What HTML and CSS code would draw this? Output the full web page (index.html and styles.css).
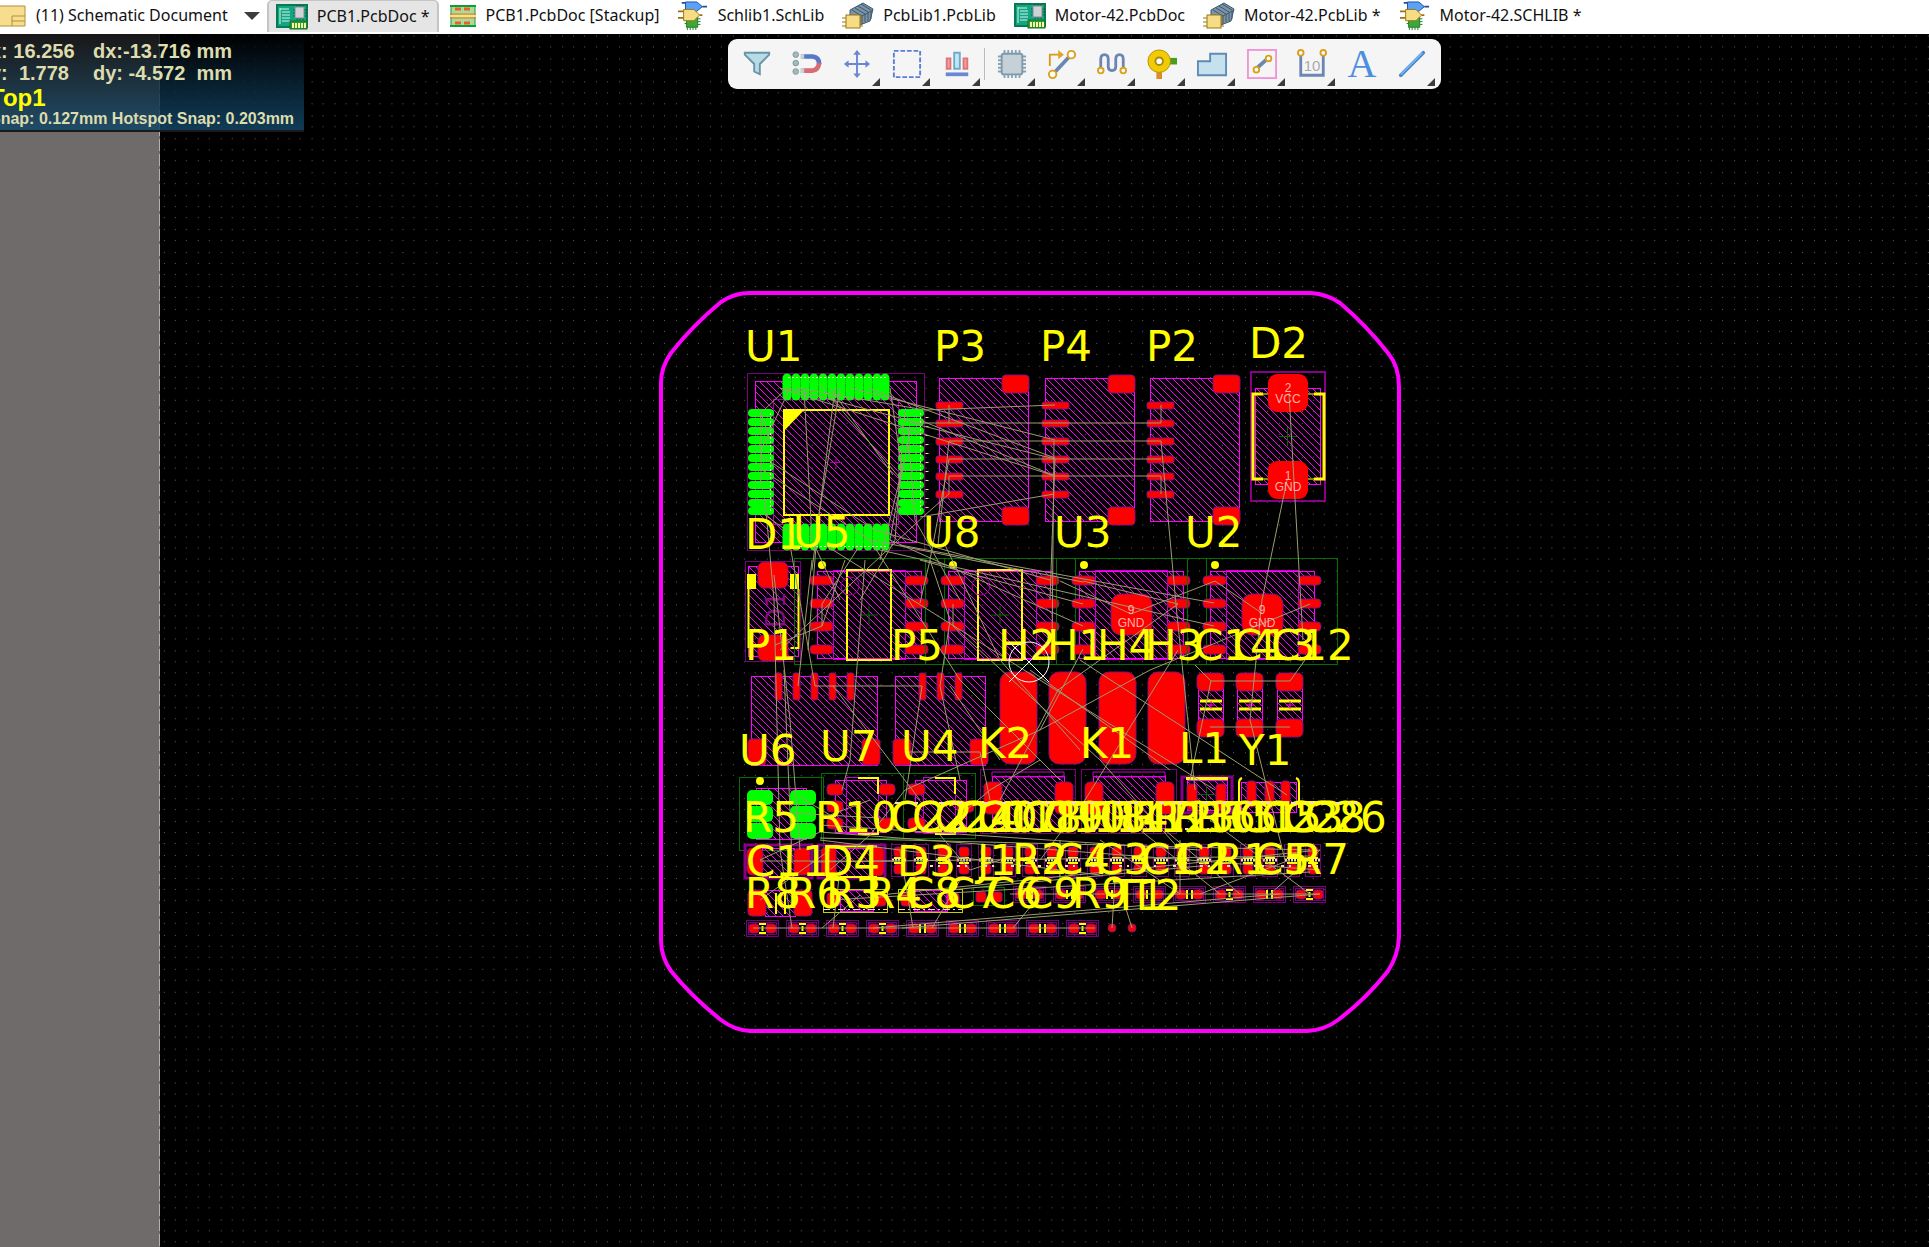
FILE: index.html
```
<!DOCTYPE html>
<html lang="en">
<head>
<meta charset="utf-8">
<title>PCB1.PcbDoc</title>
<link rel="stylesheet" href="styles.css">
</head>
<body>
<svg class="defs" aria-hidden="true">
  <defs>
    <symbol id="i-board" viewBox="0 0 32 26">
      <rect x="1" y="1" width="30" height="22" fill="#12a583" stroke="#067a50" stroke-width="2"/>
      <path d="M4 4v16M4 5h9M6 8h8M6 11h8M6 14h8M6 17h8" stroke="#d5f5e8" stroke-width="1" fill="none"/>
      <path d="M21 1v15M24 1v15M27 1v15M17 6h14M17 9h14M17 12h14" stroke="#06603f" stroke-width="1"/>
      <rect x="19" y="3" width="9" height="11" fill="#cfd3d6" stroke="#889"/>
      <rect x="14" y="17" width="17" height="8" fill="#2c9b35" stroke="#12702a"/>
      <path d="M17 19v5M20 19v5M23 19v5M26 19v5M29 19v5" stroke="#fdf7a0" stroke-width="2"/>
    </symbol>
    <symbol id="i-stack" viewBox="0 0 26 22">
      <rect x="1" y="1" width="24" height="20" fill="#a8dc9c" stroke="#219a3d" stroke-width="1"/>
      <path d="M0 1h26M0 21h26" stroke="#129a3c" stroke-width="2"/>
      <path d="M0 9h26M0 13h26" stroke="#e8732c" stroke-width="1"/><path d="M0 11h26" stroke="#ffe070" stroke-width="2"/>
      <path d="M5 4h6M14 4h6M5 18h6M14 18h6" stroke="#e8641c" stroke-width="3"/>
    </symbol>
    <symbol id="i-schlib" viewBox="0 0 32 32">
      <path d="M9 17h12v11H9z" fill="#3fa63a" stroke="#1f7a26"/>
      <path d="M10 28v3M13 28v3M16 28v3M19 28v3M21 19h3M21 22h3M21 25h3M7 24h2" stroke="#1f7a26"/>
      <path d="M8 1h12l6 5-6 5H8z" fill="#5aa2f7" stroke="#1c4f9c"/><path d="M4 2h4M26 6h5" stroke="#1c4f9c" stroke-width="2"/>
      <path d="M6 9h11l6 6-6 6H6z" fill="#f6dc84" stroke="#9a7412"/><path d="M0 11h6M0 18h6M23 15h3" stroke="#9a7412" stroke-width="2"/>
    </symbol>
    <symbol id="i-pcblib" viewBox="0 0 32 28">
      <path d="M8 8L21 1l10 6-3 12-10 4-10-8z" fill="#7b95a8" stroke="#40566b"/>
      <path d="M10 8l10 6M13 6l10 6M16 4l10 6M19 2l10 6M20 14l11-6M20 14v8M23 12v8M26 11v8M29 9v8" stroke="#40566b" stroke-width="1"/>
      <rect x="4" y="13" width="14" height="13" fill="#f6dc84" stroke="#9a7412"/>
      <path d="M0 16h4M0 20h4M0 24h4M18 16h3M18 20h3M18 24h3" stroke="#9a7412" stroke-width="1"/>
    </symbol>
    <symbol id="i-arrow" viewBox="0 0 8 8"><path d="M8 0v8H0z" fill="#3c3c3c"/></symbol>

    <pattern id="grid" x="653" y="286" width="113.8" height="113.8" patternUnits="userSpaceOnUse">
      <path shape-rendering="crispEdges" fill="none" stroke="#606060" stroke-width="1" d="M0 .5h113M0 11.5h113M0 23.5h113M0 34.5h113M0 45.5h113M0 57.5h113M0 68.5h113M0 80.5h113M0 91.5h113M0 102.5h113" stroke-dasharray="1 10 1 11 1 10 1 10 1 11 1 10 1 11 1 10 1 10 1 11"/>
    </pattern>
    <pattern id="hatch" width="7" height="7" patternUnits="userSpaceOnUse">
      <path d="M-1-1L8 8M6-1L8 1M-1 6L1 8" stroke="#f0f" stroke-width="1"/>
    </pattern>
    <g id="v12"><path d="M0 0v18" stroke="#0f0" stroke-width="9" stroke-linecap="round"/></g>
    <g id="h12"><path d="M0 0h18" stroke="#0f0" stroke-width="8" stroke-linecap="round"/></g>
    <g id="vrow"><use href="#v12"/><use href="#v12" x="9"/><use href="#v12" x="18"/><use href="#v12" x="27"/><use href="#v12" x="36"/><use href="#v12" x="45"/><use href="#v12" x="54"/><use href="#v12" x="63"/><use href="#v12" x="72"/><use href="#v12" x="81"/><use href="#v12" x="90"/><use href="#v12" x="98"/></g>
    <g id="hcol"><use href="#h12"/><use href="#h12" y="9"/><use href="#h12" y="18"/><use href="#h12" y="27"/><use href="#h12" y="36"/><use href="#h12" y="45"/><use href="#h12" y="54"/><use href="#h12" y="63"/><use href="#h12" y="72"/><use href="#h12" y="81"/><use href="#h12" y="90"/><use href="#h12" y="98"/></g>
    <g id="conn">
      <rect class="hatched" x="3.500" y="4.500" width="89" height="143"/>
      <g class="pad"><rect y="28" width="27" height="7" rx="2"/><rect y="46" width="27" height="7" rx="2"/><rect y="64" width="27" height="7" rx="2"/><rect y="82" width="27" height="7" rx="2"/><rect y="99" width="27" height="7" rx="2"/><rect y="117" width="27" height="7" rx="2"/><rect x="66" y="1" width="27" height="18" rx="4"/><rect x="66" y="133" width="27" height="18" rx="4"/></g>
    </g>
    <g id="soic">
      <rect class="court" x=".5" y="1.500" width="150" height="106"/>
      <rect class="hatched" x="23.500" y="14.500" width="104" height="87"/>
      <rect class="frame" x="39.500" y="13.500" width="72" height="89"/>
      <g class="pad"><rect x="16" y="19" width="23" height="9" rx="4"/><rect x="16" y="42" width="23" height="9" rx="4"/><rect x="16" y="65" width="23" height="9" rx="4"/><rect x="16" y="88" width="23" height="9" rx="4"/><rect x="111" y="19" width="23" height="9" rx="4"/><rect x="111" y="42" width="23" height="9" rx="4"/><rect x="111" y="65" width="23" height="9" rx="4"/><rect x="111" y="88" width="23" height="9" rx="4"/></g>
      <circle cx="28" cy="8" r="4" fill="#ff0"/>
      <path d="M66 58h18M75 49v18" stroke="#060"/>
    </g>
    <g id="body"><rect x="53" y="13" width="44" height="90" fill="none" stroke="#ff0" stroke-width="2"/><circle cx="56" cy="29" r="9" fill="none" stroke="#a0a"/></g>
    <g id="bigcap">
      <rect class="hatched" x="1.500" y="10.500" width="25" height="44"/>
      <rect class="padr" width="27" height="18" rx="5"/><rect class="padr" y="46" width="27" height="18" rx="5"/>
      <path d="M3 28h22M3 36h22" stroke="#ff0" stroke-width="3"/><path d="M10 32h8M14 28v8" stroke="#f0f"/>
    </g>
    <g id="hchip"><rect class="court2" x=".5" y=".5" width="32" height="16"/><rect class="court2" x="2.500" y="2.500" width="28" height="12"/><rect class="padr" x="3" y="4" width="10" height="9" rx="3"/><rect class="padr" x="20" y="4" width="10" height="9" rx="3"/></g>
    <g id="res"><use href="#hchip"/><path d="M13 4h7M13 13h7M16.500 6v5" stroke="#ff0" stroke-width="2"/></g>
    <g id="cap"><use href="#hchip"/><path d="M14 4v9M19 4v9" stroke="#ff0" stroke-width="2"/></g>
    <g id="vchip"><rect class="court2" x=".5" y=".5" width="15" height="32"/><rect class="padr" x="3" y="3" width="10" height="10" rx="3"/><rect class="padr" x="3" y="20" width="10" height="10" rx="3"/><path d="M3 14h10M3 19h10" stroke="#ff0" stroke-width="2"/><path d="M1 16h14" stroke="#f5deb3" stroke-width="3" stroke-dasharray="2 1"/></g>
    <g id="relay">
      <rect class="court2" x=".5" y=".5" width="95" height="64"/><rect class="hatched" x="12.500" y="7.500" width="72" height="52"/><path d="M12 3h72v5H12z" fill="none" stroke="#c0c"/>
      <rect class="padr" x="4" y="13" width="18" height="32" rx="5"/><rect class="padr" x="75" y="13" width="18" height="32" rx="5"/>
    </g>
  </defs>
</svg>

<nav class="tabs" aria-label="Open documents">
  <button class="tab group" type="button"><svg class="folder" viewBox="0 0 26 22"><path d="M-2 1h27v20H-2z" fill="#f7de8e" stroke="#b08f3c"/><path d="M12 21V11h13M12 16h13" fill="none" stroke="#b08f3c"/></svg><span>(11) Schematic Document</span><svg class="drop" viewBox="0 0 16 8"><path d="M0 0h16L8 8z" fill="#3c3c3c"/></svg></button>
  <button class="tab active" type="button"><svg class="ti"><use href="#i-board"/></svg><span>PCB1.PcbDoc *</span></button>
  <button class="tab stack" type="button"><svg class="ti small"><use href="#i-stack"/></svg><span>PCB1.PcbDoc [Stackup]</span></button>
  <button class="tab" type="button"><svg class="ti"><use href="#i-schlib"/></svg><span>Schlib1.SchLib</span></button>
  <button class="tab" type="button"><svg class="ti"><use href="#i-pcblib"/></svg><span>PcbLib1.PcbLib</span></button>
  <button class="tab" type="button"><svg class="ti"><use href="#i-board"/></svg><span>Motor-42.PcbDoc</span></button>
  <button class="tab" type="button"><svg class="ti"><use href="#i-pcblib"/></svg><span>Motor-42.PcbLib *</span></button>
  <button class="tab" type="button"><svg class="ti"><use href="#i-schlib"/></svg><span>Motor-42.SCHLIB *</span></button>
</nav>

<main class="editor">
<svg class="canvas" viewBox="0 34 1929 1213" role="img" aria-label="PCB layout">
  <rect y="34" width="1929" height="1213" fill="url(#grid)"/>
  <rect y="34" width="160" height="1213" fill="#706b6b"/>
  <path d="M159.500 34V1247" stroke="#b5b0b0" stroke-dasharray="12 3"/>

  <path d="M750 293H1311Q1327 294 1340 303Q1366 325 1388 353Q1399 366 1399 387V937Q1398 956 1388 971Q1366 999 1338 1020Q1325 1030 1307 1031H750Q734 1030 721 1020Q692 997 671 971Q661 957 661 940V383Q661 367 671 353Q693 325 721 302Q734 293 750 293Z" fill="none" stroke="#f0f" stroke-width="4"/>

  <rect class="court2" x="747.500" y="373.500" width="177" height="177"/>
  <rect class="hatched" x="755.500" y="381.500" width="161" height="161"/>
  <rect x="773.500" y="399.500" width="125" height="125" fill="none" stroke="#a0a"/>
  <use href="#vrow" x="787" y="378"/><use href="#vrow" x="787" y="528"/>
  <use href="#hcol" x="752" y="413"/><use href="#hcol" x="902" y="413"/>
  <g stroke="#e8ffb0" stroke-dasharray="2 2"><path d="M788 377.500h98M788 546.500h98M770.500 413v98M920.500 413v98"/></g>
  <path d="M927 417v96" stroke="#f5deb3" stroke-dasharray="1 8" stroke-width="3"/>
  <rect x="784" y="410" width="105" height="105" fill="none" stroke="#ff0" stroke-width="2"/>
  <path d="M783 409h22l-22 23z" fill="#ff0"/>
  <path d="M830 462.500h12M836 457v12" stroke="#a0a"/>

  <use href="#conn" x="936" y="374"/><use href="#conn" x="1042" y="374"/><use href="#conn" x="1147" y="374"/>

  <rect x="1251" y="372" width="74" height="129" fill="none" stroke="#808" stroke-width="2"/>
  <rect class="hatched" x="1255.500" y="388.500" width="65" height="96"/>
  <path d="M1262 394h53M1262 479h53" stroke="#880" stroke-width="2"/>
  <path d="M1263 394h-10v85h10M1314 394h10v85h-10" fill="none" stroke="#ff0" stroke-width="3"/>
  <rect x="1268" y="374" width="40" height="38" rx="9" fill="red"/><rect x="1268" y="461" width="40" height="38" rx="9" fill="red"/>
  <path d="M1279 436.500h18M1287.500 427v19" stroke="#060"/>

  <rect class="court2" x="745.500" y="561.500" width="55" height="100"/>
  <rect class="hatched" x="748.500" y="566.500" width="50" height="90"/>
  <text class="ghost" transform="translate(785 628) rotate(-90)">D1</text>
  <rect class="padr" x="758" y="562" width="30" height="26" rx="6"/><rect class="padr" x="758" y="635" width="30" height="26" rx="6"/>
  <path d="M747 574h9v15h-9zM790 574h9v15h-9z" fill="#ff0"/><path d="M748.500 589v59M798.500 589v59h-8" stroke="#ff0" fill="none" stroke-width="2"/>

  <use href="#soic" x="794" y="557"/><use href="#soic" x="925" y="557"/><use href="#soic" x="1056" y="557"/><use href="#soic" x="1187" y="557"/>
  <use href="#body" x="794" y="557"/><use href="#body" x="925" y="557"/>
  <rect class="padr" x="1111" y="594" width="41" height="41" rx="10"/><rect class="padr" x="1242" y="594" width="41" height="41" rx="10"/>

  <rect class="hatched" x="751.500" y="676.500" width="126" height="89"/><rect class="hatched" x="895.500" y="676.500" width="90" height="89"/>
  <g class="pad"><rect x="775" y="673" width="7" height="27" rx="2"/><rect x="793" y="673" width="7" height="27" rx="2"/><rect x="811" y="673" width="7" height="27" rx="2"/><rect x="829" y="673" width="7" height="27" rx="2"/><rect x="847" y="673" width="7" height="27" rx="2"/><rect x="919" y="673" width="7" height="27" rx="2"/><rect x="937" y="673" width="7" height="27" rx="2"/><rect x="955" y="673" width="7" height="27" rx="2"/>
  <rect x="748" y="739" width="18" height="26" rx="4"/><rect x="862" y="739" width="18" height="26" rx="4"/><rect x="893" y="739" width="18" height="26" rx="4"/><rect x="970" y="739" width="18" height="26" rx="4"/>
  <rect x="1000" y="672" width="37" height="92" rx="10"/><rect x="1049" y="672" width="37" height="92" rx="10"/><rect x="1099" y="672" width="37" height="92" rx="10"/><rect x="1148" y="672" width="37" height="92" rx="10"/></g>
  <use href="#bigcap" x="1197" y="673"/><use href="#bigcap" x="1236" y="673"/><use href="#bigcap" x="1276" y="673"/>

  <rect class="court" x="739.500" y="777.500" width="84" height="73"/><rect class="hatched" x="756.500" y="788.500" width="50" height="51"/>
  <circle cx="760" cy="781" r="4" fill="#ff0"/>
  <g fill="#0f0"><rect x="747" y="790" width="26" height="15" rx="5"/><rect x="747" y="806" width="26" height="16" rx="5"/><rect x="747" y="823" width="26" height="16" rx="5"/><rect x="790" y="790" width="26" height="15" rx="5"/><rect x="790" y="806" width="26" height="16" rx="5"/><rect x="790" y="823" width="26" height="16" rx="5"/></g>
  <rect class="court" x="821.500" y="773.500" width="82" height="65"/><rect class="court" x="903.500" y="773.500" width="72" height="65"/>
  <rect class="hatched" x="835.500" y="780.500" width="51" height="52"/><rect class="frame" x="846.500" y="777.500" width="32" height="56"/>
  <rect class="hatched" x="915.500" y="780.500" width="51" height="52"/><rect class="frame" x="923.500" y="777.500" width="32" height="56"/>
  <g class="pad"><rect x="827" y="784" width="16" height="11" rx="4"/><rect x="827" y="801" width="16" height="11" rx="4"/><rect x="827" y="818" width="16" height="11" rx="4"/><rect x="879" y="784" width="16" height="11" rx="4"/><rect x="879" y="818" width="16" height="11" rx="4"/><rect x="908" y="784" width="17" height="11" rx="4"/><rect x="908" y="818" width="17" height="11" rx="4"/><rect x="957" y="801" width="17" height="11" rx="4"/></g>
  <path d="M858 778h20v16M858 834h20v-16M935 778h20v16M935 834h20v-16" fill="none" stroke="#ff0" stroke-width="2"/>
  <use href="#relay" x="980" y="769"/><use href="#relay" x="1081" y="769"/>
  <rect class="hatched" x="1187.500" y="780.500" width="40" height="30"/><rect x="1182" y="777" width="50" height="36" fill="none" stroke="#808" stroke-width="3"/><path d="M1186 778.500h42" stroke="#ff0" stroke-width="3"/><path d="M1198 794.500h17M1206.500 786v17" stroke="#060"/>
  <rect class="hatched" x="1241.500" y="782.500" width="55" height="30"/>
  <path d="M1242 778q-3 1-3 5v25M1296 778q3 1 3 5v25" fill="none" stroke="#ff0" stroke-width="2"/>
  <g class="pad"><rect x="1187" y="784" width="10" height="26" rx="3"/><rect x="1216" y="784" width="10" height="26" rx="3"/><rect x="1247" y="781" width="9" height="26" rx="3"/><rect x="1265" y="781" width="9" height="26" rx="3"/><rect x="1281" y="781" width="9" height="26" rx="3"/></g>

  <rect class="hatched" x="762.500" y="848.500" width="32" height="28"/><rect class="hatched" x="834.500" y="848.500" width="37" height="28"/>
  <rect x="745" y="845" width="67" height="33" fill="none" stroke="#808" stroke-width="3"/><rect x="818" y="845" width="67" height="33" fill="none" stroke="#808" stroke-width="3"/>
  <g class="pad"><rect x="747" y="848" width="16" height="27" rx="5"/><rect x="794" y="848" width="16" height="27" rx="5"/><rect x="821" y="847" width="15" height="29" rx="5"/><rect x="870" y="847" width="14" height="29" rx="5"/></g>
  <path d="M826 846.500h51M826 877h51M769 877h20" stroke="#ff0" stroke-width="2"/>
  <use href="#vchip" x="891" y="844"/><use href="#vchip" x="913" y="844"/><use href="#vchip" x="935" y="844"/><use href="#vchip" x="956" y="844"/><use href="#vchip" x="978" y="844"/><use href="#vchip" x="1000" y="844"/><use href="#vchip" x="1022" y="844"/><use href="#vchip" x="1044" y="844"/><use href="#vchip" x="1065" y="844"/><use href="#vchip" x="1087" y="844"/><use href="#vchip" x="1109" y="844"/><use href="#vchip" x="1131" y="844"/><use href="#vchip" x="1153" y="844"/><use href="#vchip" x="1174" y="844"/><use href="#vchip" x="1196" y="844"/><use href="#vchip" x="1218" y="844"/><use href="#vchip" x="1240" y="844"/><use href="#vchip" x="1262" y="844"/><use href="#vchip" x="1284" y="844"/><use href="#vchip" x="1305" y="844"/>

  <rect class="hatched" x="765.500" y="890.500" width="30" height="26"/>
  <g class="pad"><rect x="748" y="890" width="18" height="26" rx="4"/><rect x="794" y="890" width="18" height="26" rx="4"/><rect x="827" y="893" width="13" height="13" rx="3"/><rect x="873" y="893" width="13" height="13" rx="3"/><rect x="901" y="893" width="13" height="13" rx="3"/><rect x="946" y="893" width="13" height="13" rx="3"/><rect x="976" y="892" width="10" height="10" rx="2"/><rect x="992" y="892" width="10" height="10" rx="2"/></g>
  <path d="M776 893v21M785 893v21" stroke="#ff0" stroke-width="2"/>
  <rect class="hatched" x="840.500" y="890.500" width="33" height="21"/><rect class="hatched" x="914.500" y="890.500" width="33" height="21"/>
  <g fill="none" stroke="#cc0"><rect x="823.500" y="889.500" width="64" height="23"/><rect x="898.500" y="889.500" width="64" height="23"/></g>
  <path d="M823 909.500h64M898 909.500h64" stroke="#f5deb3" stroke-dasharray="7 3 2 3"/>
  <rect class="court" x="973.500" y="887.500" width="31" height="18"/>
  <use href="#cap" x="1013" y="886"/><use href="#cap" x="1053" y="886"/><use href="#cap" x="1093" y="886"/><use href="#cap" x="1133" y="886"/><use href="#cap" x="1173" y="886"/><use href="#res" x="1213" y="886"/><use href="#cap" x="1253" y="886"/><use href="#res" x="1293" y="886"/>
  <use href="#res" x="746" y="920"/><use href="#res" x="786" y="920"/><use href="#res" x="826" y="920"/><use href="#res" x="866" y="920"/><use href="#cap" x="906" y="920"/><use href="#cap" x="946" y="920"/><use href="#cap" x="986" y="920"/><use href="#cap" x="1026" y="920"/><use href="#res" x="1066" y="920"/>
  <circle class="padr" cx="1112" cy="928" r="4"/><circle class="padr" cx="1132" cy="928" r="4"/>

  <g class="nets">
    <path d="M761 485V413L787 388L915 422M761 450L790 388M761 413L770 440M796 388L925 410L1055 405M804 388L812 540L840 600M835 388L812 570M840 388L818 520L808 650M820 385L900 478M830 388L893 475M850 388L1055 440M868 388L1055 458M780 388L1055 476M760 455L875 530L1050 580M762 470L870 540L1083 582M765 515L800 540M890 388L902 470L880 560"/>
    <path d="M949 405V423M910 423H1161M949 441H1161M949 459H1161M949 476H1161V494M1161 405V423M949 494V476M949 441L938 545M949 459L930 560L920 603M949 494L925 515L780 650M915 424L1055 459M920 420L1055 476M1054 441L1052 650M1054 494L920 517M1055 459L1050 600M1161 441L1177 615L1195 790M1289 393L1303 640M1287 480L1262 600L1250 720L1265 780L1285 860"/>
    <path d="M910 430L890 540M908 430L915 520L960 600M905 410L895 540L860 600M920 560L1083 604M900 545L1214 603M890 540L1083 626M880 550L1214 626M870 540L960 680L1060 780M860 545L822 604V626M845 560L822 626L775 645M812 560L798 686M790 545L815 686M865 560L850 760L842 790M765 500L774 600L780 850M774 575L790 720L800 850M784 670L792 860M815 686H922M833 686L920 800M940 686L950 620L930 560M940 686L960 780M922 686L905 800M950 686L1000 760M953 604V626L1100 760L1180 850M945 545L1000 660L1080 750M825 545L1215 790M1060 581L1131 614L1215 581L1263 614M1083 581L1178 604M1178 604L1058 690L1000 800M1310 604L1150 670L1040 730L905 790M1178 650L1085 800L1040 860M1083 649L1040 730M1305 660L1290 681H1211L1195 665M1210 727H1290M1211 681L1190 780M1030 670L1170 770M1080 660L1287 795M905 752H980L990 800"/>
    <path d="M820 838L1310 850M820 832L1320 870M820 825L1200 850M820 840L1100 875M800 797L830 815L870 800M790 813L880 818M820 832L760 860M870 835L830 870M760 861H900M810 862L1310 856M760 900L830 850M880 895L1320 850M830 900L1310 872M950 890L1200 866M1010 894H1320M902 928L1320 894M873 928L1280 894M753 928H1095M792 928L780 850M822 928L860 895M833 928L840 870M913 928L900 850M932 928L960 880M1013 928L1040 895M1112 928L1115 880M1132 928L1120 890M1140 830L1220 894M1165 830L1240 894M1210 820L1310 894M1270 894L1320 850M1200 894L1290 860M1060 840L1060 894M1100 840L1180 894M1180 840L1180 894M940 832L990 790L1040 760M870 835L905 790M940 835L970 870L1000 860"/>
  </g>

  <g class="pinname"><text x="1288" y="392">2</text><text x="1288" y="403">VCC</text><text x="1288" y="480">1</text><text x="1288" y="491">GND</text><text x="1131" y="614">9</text><text x="1131" y="627">GND</text><text x="1262" y="614">9</text><text x="1262" y="627">GND</text></g>

  <g class="silk">
    <text x="745" y="361">U1</text><text x="934" y="361">P3</text><text x="1040" y="361">P4</text><text x="1146" y="361">P2</text><text x="1249" y="358">D2</text>
    <text x="745" y="549">D1</text><text x="793" y="547">U5</text><text x="923" y="547">U8</text><text x="1054" y="547">U3</text><text x="1185" y="547">U2</text>
    <text x="745" y="660">P1</text><text x="891" y="660">P5</text><text x="998" y="660">H2</text><text x="1047" y="660">H1</text><text x="1097" y="660">H4</text><text x="1145" y="660">H3</text><text x="1194" y="660">C14</text><text x="1233" y="660">C13</text><text x="1271" y="660">C12</text>
    <text x="739" y="765">U6</text><text x="820" y="761">U7</text><text x="901" y="761">U4</text><text x="978" y="758">K2</text><text x="1080" y="758">K1</text><text x="1179" y="763">L1</text><text x="1239" y="765">Y1</text>
    <text x="743" y="832">R5</text><text x="815" y="832">R10</text><text x="890" y="832">C22</text><text x="912" y="832">C21</text><text x="934" y="832">C24</text><text x="955" y="832">C20</text><text x="977" y="832">C17</text><text x="999" y="832">C18</text><text x="1021" y="832">C19</text><text x="1043" y="832">C10</text><text x="1064" y="832">R18</text><text x="1086" y="832">R14</text><text x="1108" y="832">R17</text><text x="1130" y="832">R12</text><text x="1152" y="832">R13</text><text x="1173" y="832">R16</text><text x="1195" y="832">R15</text><text x="1217" y="832">R11</text><text x="1239" y="832">C15</text><text x="1261" y="832">C23</text><text x="1283" y="832">C28</text><text x="1304" y="832">C26</text>
    <text x="746" y="876">C11</text><text x="821" y="876">D4</text><text x="897" y="876">D3</text><text x="977" y="875">J1</text><text x="1012" y="874">R2</text><text x="1054" y="874">C4</text><text x="1094" y="874">C3</text><text x="1141" y="874">C1</text><text x="1175" y="874">C2</text><text x="1214" y="874">R1</text><text x="1254" y="874">C5</text><text x="1293" y="874">R7</text>
    <text x="745" y="908">R8</text><text x="787" y="908">R6</text><text x="826" y="908">R3</text><text x="866" y="908">R4</text><text x="905" y="908">C8</text><text x="946" y="908">C7</text><text x="986" y="908">C6</text><text x="1024" y="908">C9</text><text x="1072" y="908">R9</text><text x="1113" y="910">T1</text><text x="1129" y="910">T2</text>
  </g>
  <g fill="none" stroke="#fff"><circle cx="1029" cy="662" r="20"/><path d="M1009 642l40 40M1049 642l-40 40"/></g>
  <g stroke="#f5deb3" stroke-width="2" fill="none"><path d="M895 803h480" stroke-dasharray="5 9 2 3 4 21"/><path d="M900 829h400" stroke-dasharray="3 19 2 33"/><path d="M930 866h390" stroke-dasharray="3 5 2 17"/></g>
</svg>

<section class="hud" aria-label="Cursor position">
  <div class="row"><span>x: 16.256</span><span>dx:-13.716 mm</span></div>
  <div class="row"><span>y:  1.778</span><span>dy: -4.572  mm</span></div>
  <div class="layer">Top1</div>
  <div class="snap">Snap: 0.127mm Hotspot Snap: 0.203mm</div>
</section>

<div class="toolbar" role="toolbar" aria-label="Active bar">
  <button type="button" aria-label="Filter"><svg viewBox="0 0 32 32"><path d="M3 4h26v2L19 16v11l-6-3V16L3 6z" fill="#b9dbe6" stroke="#6795a8" stroke-width="2"/></svg></button>
  <button type="button" aria-label="Snapping"><svg viewBox="0 0 32 32"><g fill="#a5b8bd" stroke="#7f979d"><circle cx="4" cy="6" r="3"/><circle cx="4" cy="15" r="3"/><circle cx="4" cy="24" r="3"/></g><path d="M10 8h12q7 1 7 8" fill="none" stroke="#5579c4" stroke-width="5"/><path d="M29 15q-1 7-7 8H10" fill="none" stroke="#d96b74" stroke-width="5"/><path d="M9 8h4M9 23h4" stroke="#c8d0d8" stroke-width="5"/></svg></button>
  <button type="button" aria-label="Move"><svg viewBox="0 0 32 32"><path d="M16 4v24M4 16h24" stroke="#6a86d4" stroke-width="2"/><path d="M16 1l4 5h-8zM16 31l4-5h-8zM2 16l5-4v8zM30 16l-5-4v8z" fill="#6a86d4"/></svg><svg class="more"><use href="#i-arrow"/></svg></button>
  <button type="button" aria-label="Select area"><svg viewBox="0 0 32 32"><rect x="2" y="2" width="28" height="28" fill="none" stroke="#5b7fd6" stroke-width="2" stroke-dasharray="5 2"/></svg><svg class="more"><use href="#i-arrow"/></svg></button>
  <button type="button" aria-label="Align"><svg viewBox="0 0 32 32"><path d="M5 10h4v11H5zM23 10h4v11h-4z" fill="#f0a0a0" stroke="#d77" stroke-width="2"/><path d="M13 4h6v17h-6z" fill="#c4e6f2" stroke="#6fa9cc" stroke-width="2"/><path d="M4 27h24" stroke="#6a86d4" stroke-width="4"/></svg><svg class="more"><use href="#i-arrow"/></svg></button>
  <span class="sep"></span>
  <button type="button" aria-label="Place component"><svg viewBox="0 0 32 32"><path d="M8 1v30M12 1v30M16 1v30M20 1v30M24 1v30M1 8h30M1 12h30M1 16h30M1 20h30M1 24h30" stroke="#8ba3b4" stroke-width="2"/><rect x="5" y="5" width="22" height="22" rx="2" fill="#c6d0d9" stroke="#7f99ac" stroke-width="2"/></svg><svg class="more"><use href="#i-arrow"/></svg></button>
  <button type="button" aria-label="Route"><svg viewBox="0 0 32 32"><path d="M3 18V6h10" fill="none" stroke="#d99a1c" stroke-width="2"/><path d="M12 1l6 5-6 5z" fill="#e0a526"/><path d="M8 25L24 8" stroke="#6b86b2" stroke-width="4"/><g fill="#fff" stroke="#dba01c" stroke-width="2"><circle cx="6" cy="27" r="4"/><circle cx="26" cy="6" r="4"/></g></svg><svg class="more"><use href="#i-arrow"/></svg></button>
  <button type="button" aria-label="Tune length"><svg viewBox="0 0 32 32"><path d="M4 20V11q0-5 4-5t4 5v8q0 4 4 4t4-4v-8q0-5 4-5t4 5v9" fill="none" stroke="#6b86b2" stroke-width="3"/><g fill="#fff" stroke="#dba01c" stroke-width="2"><circle cx="4" cy="23" r="3"/><circle cx="28" cy="23" r="3"/></g></svg><svg class="more"><use href="#i-arrow"/></svg></button>
  <button type="button" aria-label="Place via"><svg viewBox="0 0 32 32"><path d="M20 13h12" stroke="#4a9e1c" stroke-width="7"/><path d="M13 20v12" stroke="#d98c2c" stroke-width="6"/><circle cx="13" cy="13" r="12" fill="#f2cb05" stroke="#b5930b"/><circle cx="13" cy="13" r="4" fill="#fff" stroke="#a98a10" stroke-width="2"/></svg><svg class="more"><use href="#i-arrow"/></svg></button>
  <button type="button" aria-label="Place polygon"><svg viewBox="0 0 32 32"><path d="M1 13h13V5h17v23H1z" fill="#c5e1ee" stroke="#5d8bb3" stroke-width="2"/></svg><svg class="more"><use href="#i-arrow"/></svg></button>
  <button type="button" aria-label="Place room"><svg viewBox="0 0 32 32"><rect x="1" y="1" width="30" height="30" fill="none" stroke="#f095d8" stroke-width="2"/><path d="M11 20L21 11" stroke="#6b86b2" stroke-width="4"/><g fill="#fff" stroke="#dba01c" stroke-width="2"><circle cx="10" cy="22" r="3"/><circle cx="23" cy="10" r="3"/></g></svg><svg class="more"><use href="#i-arrow"/></svg></button>
  <button type="button" aria-label="Place dimension"><svg viewBox="0 0 32 32"><path d="M4 6v22h24V6" fill="none" stroke="#6b86b2" stroke-width="3"/><g fill="#fff" stroke="#dba01c" stroke-width="2"><circle cx="4" cy="4" r="3"/><circle cx="28" cy="4" r="3"/></g><text class="dim" x="16" y="23">10</text></svg><svg class="more"><use href="#i-arrow"/></svg></button>
  <button type="button" aria-label="Place text"><span class="glyph">A</span></button>
  <button type="button" aria-label="Place line"><svg viewBox="0 0 32 32"><path d="M4 28L28 4" stroke="#4a86cc" stroke-width="4" stroke-linecap="round"/><path d="M4 27L27 4" stroke="#7ab4f0" stroke-width="2"/></svg><svg class="more"><use href="#i-arrow"/></svg></button>
</div>
</main>
</body>
</html>
```
FILE: styles.css
```
* { box-sizing: border-box; }
body { margin: 0; min-height: 100vh; background: #000; overflow: hidden; font-family: "Noto Sans", "Open Sans", sans-serif; }
.defs { position: absolute; width: 0; height: 0; }
button { border: 0; background: none; padding: 0; margin: 0; font: inherit; color: inherit; }

.tabs { display: flex; height: 34px; background: #fff; overflow: hidden; color: #111; font-size: 16px; }
.tab { display: flex; align-items: center; gap: 9px; padding: 0 9px; height: 32px; white-space: nowrap; flex: none; }
.tab span { padding-bottom: 2px; }
.group { padding: 0 7px 0 0; gap: 10px; }
.active { background: #e5e5e5; border: 2px solid #c4c4c4; border-top-width: 1px; border-bottom: 0; border-radius: 5px 5px 0 0; padding: 0 7px; }
.folder { width: 26px; height: 22px; }
.drop { width: 16px; height: 8px; margin-left: 6px; }
.stack { padding: 0 8px 0 10px; }
.ti { width: 32px; height: 30px; }
.ti.small { width: 28px; height: 22px; }

.editor { position: relative; }
.canvas { display: block; width: 100%; height: auto; }
.hatched { fill: url(#hatch); stroke: #f0f; }
.frame { fill: none; stroke: #c0c; }
.court { fill: none; stroke: #007000; }
.court2 { fill: none; stroke: #780078; }
.pad, .padr { fill: red; stroke: #80107e; stroke-width: 1px; }
.nets { fill: none; stroke: #9c9c72; stroke-width: 1px; }
.silk { fill: #ff0; font-family: "DejaVu Sans", sans-serif; font-size: 42px; }
.ghost { fill: #80107e; font: 26px "DejaVu Sans", sans-serif; }
.pinname { fill: #ffb0a8; font: 12px "Liberation Sans", sans-serif; text-anchor: middle; }

.hud { position: absolute; top: 0; left: 0; display: flex; flex-direction: column; width: 304px; height: 98px; padding-top: 6px; overflow: hidden; white-space: pre; font-family: "Liberation Sans", sans-serif; font-weight: 700; color: #dedcae; background: linear-gradient(rgba(0, 0, 0, .78), rgba(18, 70, 102, .85) 96px, #1a1a1a 96px); }
.hud > * { margin-left: -10px; }
.row { display: grid; grid-template-columns: 103px 1fr; font-size: 20px; line-height: 22px; }
.layer { font-size: 24px; line-height: 28px; color: #ff0; }
.snap { font-size: 16px; line-height: 14px; }

.toolbar { position: absolute; top: 5px; left: 728px; display: flex; padding: 0 4px; height: 50px; background: #f5f5f5; border-radius: 9px; }
.toolbar button { position: relative; width: 50px; height: 50px; display: grid; place-items: center; }
.toolbar button > svg { width: 30px; height: 30px; }
.toolbar button > .more { position: absolute; right: 2px; bottom: 3px; width: 8px; height: 8px; }
.sep { width: 1px; height: 32px; margin: 9px 2px; background: #bbb; }
.glyph { font: 40px/40px "Liberation Serif", serif; color: #4c8fdc; }
.dim { font: 16px "Liberation Sans", sans-serif; fill: #aaa; text-anchor: middle; }
```
